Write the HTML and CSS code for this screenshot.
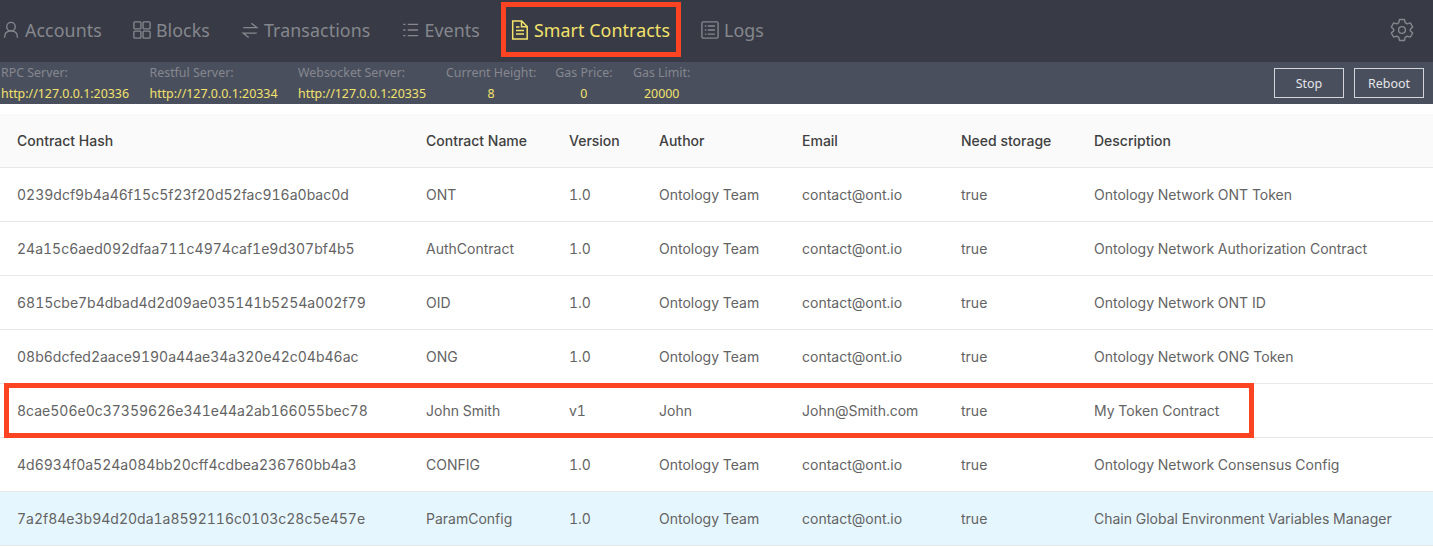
FILE: index.html
```html
<!DOCTYPE html>
<html lang="en">
<head>
    <meta charset="UTF-8">
    <title>Smart Contracts</title>
    <link rel="stylesheet" href="styles.css">
</head>
<body>
    <nav class="nav">
        <a class="nav-item">
            <svg class="icon" viewBox="0 0 20 20"><circle cx="10" cy="6.300" r="4.700"/><path d="M2.800 18.500c0-5 3-7.500 7.200-7.500s7.200 2.500 7.200 7.500"/></svg>
            Accounts
        </a>
        <a class="nav-item">
            <svg class="icon" viewBox="0 0 20 20"><rect x="1" y="1" width="7.800" height="7.800" rx="1"/><rect x="11.200" y="1" width="7.800" height="7.800" rx="1"/><rect x="1" y="11.200" width="7.800" height="7.800" rx="1"/><rect x="11.200" y="11.200" width="7.800" height="7.800" rx="1"/></svg>
            Blocks
        </a>
        <a class="nav-item">
            <svg class="icon" viewBox="0 0 20 20"><path d="M2.500 7.300h15l-6-4.800M17.500 13.500H2.500l6 4.800"/></svg>
            Transactions
        </a>
        <a class="nav-item">
            <svg class="icon" viewBox="0 0 20 20"><path d="M7.500 3.700H19M7.500 10H19M7.500 16.300H19M2.500 3.700h2.500M2.500 10h2.500M2.500 16.300h2.500"/></svg>
            Events
        </a>
        <a class="nav-item active">
            <svg class="icon doc" viewBox="0 0 18 20"><path d="M1.700 1h9l5.500 5.500V19H1.700zM10.500 1v5.700h5.700M5 7h3.500M5 10.500h8M5 14h8"/></svg>
            Smart Contracts
        </a>
        <a class="nav-item">
            <svg class="icon" viewBox="0 0 20 20"><rect x="1" y="1" width="18" height="18" rx="1.500"/><path d="M7.500 5.500h8M7.500 10h8M7.500 14.500h8M4.300 5.500h1.700M4.300 10h1.700M4.300 14.500h1.700"/></svg>
            Logs
        </a>
        <svg class="icon gear" viewBox="0 0 24 24"><circle cx="12" cy="12" r="3.400"/><path d="M9.600 1.500h4.800l.8 3.200 1.900 1.100 3.200-.9 2.400 4.100-2.400 2.300v1.400l2.400 2.300-2.400 4.100-3.200-.9-1.900 1.100-.8 3.200H9.600l-.8-3.200-1.900-1.100-3.200.9-2.400-4.100L3.700 12.700v-1.400L1.300 9l2.400-4.100 3.200.9 1.900-1.100z" stroke-linejoin="round"/></svg>
    </nav>

    <div class="status">
        <div class="stat stat-rpc"><span class="stat-label">RPC Server:</span><span class="stat-value">http://127.0.0.1:20336</span></div>
        <div class="stat stat-rest"><span class="stat-label">Restful Server:</span><span class="stat-value">http://127.0.0.1:20334</span></div>
        <div class="stat stat-ws"><span class="stat-label">Websocket Server:</span><span class="stat-value">http://127.0.0.1:20335</span></div>
        <div class="stat stat-height"><span class="stat-label">Current Height:</span><span class="stat-value center">8</span></div>
        <div class="stat stat-price"><span class="stat-label">Gas Price:</span><span class="stat-value center">0</span></div>
        <div class="stat"><span class="stat-label">Gas Limit:</span><span class="stat-value center">20000</span></div>
        <div class="status-buttons">
            <button class="btn">Stop</button>
            <button class="btn">Reboot</button>
        </div>
    </div>

    <table class="contracts">
        <colgroup>
            <col class="c1"><col class="c2"><col class="c3"><col class="c4"><col class="c5"><col class="c6"><col class="c7">
        </colgroup>
        <thead>
            <tr><th>Contract Hash</th><th>Contract Name</th><th>Version</th><th>Author</th><th>Email</th><th>Need storage</th><th>Description</th></tr>
        </thead>
        <tbody>
            <tr><td>0239dcf9b4a46f15c5f23f20d52fac916a0bac0d</td><td>ONT</td><td>1.0</td><td>Ontology Team</td><td>contact@ont.io</td><td>true</td><td>Ontology Network ONT Token</td></tr>
            <tr><td>24a15c6aed092dfaa711c4974caf1e9d307bf4b5</td><td>AuthContract</td><td>1.0</td><td>Ontology Team</td><td>contact@ont.io</td><td>true</td><td>Ontology Network Authorization Contract</td></tr>
            <tr><td>6815cbe7b4dbad4d2d09ae035141b5254a002f79</td><td>OID</td><td>1.0</td><td>Ontology Team</td><td>contact@ont.io</td><td>true</td><td>Ontology Network ONT ID</td></tr>
            <tr><td>08b6dcfed2aace9190a44ae34a320e42c04b46ac</td><td>ONG</td><td>1.0</td><td>Ontology Team</td><td>contact@ont.io</td><td>true</td><td>Ontology Network ONG Token</td></tr>
            <tr><td>8cae506e0c37359626e341e44a2ab166055bec78</td><td>John Smith</td><td>v1</td><td>John</td><td>John@Smith.com</td><td>true</td><td>My Token Contract</td></tr>
            <tr><td>4d6934f0a524a084bb20cff4cdbea236760bb4a3</td><td>CONFIG</td><td>1.0</td><td>Ontology Team</td><td>contact@ont.io</td><td>true</td><td>Ontology Network Consensus Config</td></tr>
            <tr class="hover"><td>7a2f84e3b94d20da1a8592116c0103c28c5e457e</td><td>ParamConfig</td><td>1.0</td><td>Ontology Team</td><td>contact@ont.io</td><td>true</td><td>Chain Global Environment Variables Manager</td></tr>
        </tbody>
    </table>

    <div class="mark mark-nav"></div>
    <div class="mark mark-row"></div>
</body>
</html>
```

FILE: styles.css
```css
html, body {
    margin: 0;
    padding: 0;
    overflow: hidden;
}
body {
    font-family: "Inter", "Liberation Sans", sans-serif;
    background: #fff;
    height: 547px;
    position: relative;
}
.nav {
    display: flex;
    align-items: center;
    gap: 31px;
    height: 62px;
    box-sizing: border-box;
    padding: 0 0 2px 2px;
    background: #383b45;
    font-family: "Noto Sans", sans-serif;
    font-size: 17.800px;
    letter-spacing: 0.1px;
    color: #85878e;
}
.nav-item {
    display: flex;
    align-items: center;
    gap: 5px;
}
.active { color: #f3e26b; }
.icon {
    width: 18px;
    height: 18px;
    fill: none;
    stroke: currentColor;
    stroke-width: 1.5;
}
.doc { height: 20px; }
.gear {
    width: 24px;
    height: 24px;
    margin-left: auto;
    margin-right: 19px;
    stroke-width: 1.4;
}
.status {
    display: flex;
    height: 42px;
    box-sizing: border-box;
    padding-left: 1px;
    background: #4a4f5e;
    font-family: "Noto Sans", sans-serif;
    font-size: 12.400px;
}
.stat {
    display: flex;
    flex-direction: column;
    padding-top: 2px;
    line-height: 17px;
}
.stat-label { color: #85878e; }
.stat-value {
    color: #f3e26b;
    margin-top: 4px;
}
.center { text-align: center; }
.stat-rpc { width: 148.500px; }
.stat-rest { width: 148.500px; }
.stat-ws { width: 148px; }
.stat-height { margin-right: 19px; }
.stat-price { margin-right: 20.500px; }
.status-buttons {
    display: flex;
    gap: 10px;
    margin-left: auto;
    margin-right: 9px;
    padding-top: 6px;
}
.btn {
    width: 70px;
    height: 30px;
    padding: 0;
    background: transparent;
    border: 1px solid #d4d5d8;
    color: #e4e5e7;
    font-family: "Noto Sans", sans-serif;
    font-size: 12.500px;
}
.contracts {
    width: 1433px;
    margin-top: 10px;
    border-collapse: collapse;
    table-layout: fixed;
    font-size: 14px;
    font-variant-numeric: tabular-nums;
    color: #636363;
}
.c1 { width: 409px; }
.c2 { width: 143px; }
.c3 { width: 90px; }
.c4 { width: 143px; }
.c5 { width: 159px; }
.c6 { width: 133px; }
th, td {
    padding: 0 0 0 17px;
    text-align: left;
    white-space: nowrap;
    border-bottom: 1px solid #e8e8e8;
}
th {
    height: 53px;
    background: #fafafa;
    font-weight: 500;
    color: #404040;
}
td { height: 53px; }
.hover td { background: #e6f6fe; }
.mark {
    position: absolute;
    box-sizing: border-box;
    border: 5px solid #fc4422;
}
.mark-nav {
    left: 501px;
    top: 2px;
    width: 180px;
    height: 55px;
}
.mark-row {
    left: 4px;
    top: 383px;
    width: 1250px;
    height: 55px;
}
```
